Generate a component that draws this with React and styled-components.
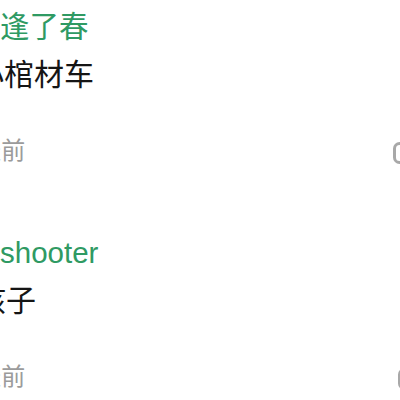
import React from "react";
import styled, { createGlobalStyle } from "styled-components";

const GlobalStyle = createGlobalStyle`
  html, body {
    margin: 0;
    padding: 0;
    background: #ffffff;
  }
  body {
    font-family: "Liberation Sans", "Noto Sans CJK SC", sans-serif;
  }
`;

const Page = styled.div`
  width: 400px;
  height: 400px;
  overflow: hidden;
  background: #ffffff;
  padding-top: 7px;
  box-sizing: border-box;
`;

const CommentList = styled.div`
  display: flex;
  flex-direction: column;
  gap: 62px;
`;

const Comment = styled.div`
  display: flex;
  flex-direction: column;
`;

const Name = styled.div`
  font-size: 29.5px;
  line-height: 40px;
  color: #2f9a63;
  white-space: nowrap;
  text-indent: ${(p) => p.$shift || 0}px;
`;

const Content = styled.div`
  margin-top: 8px;
  font-size: 30px;
  line-height: 40px;
  color: #151515;
  white-space: nowrap;
  text-indent: ${(p) => p.$shift || 0}px;
`;

const Footer = styled.div`
  margin-top: 36px;
  height: 40px;
  display: flex;
  align-items: center;
  justify-content: space-between;
`;

const Time = styled.div`
  font-size: 24px;
  line-height: 40px;
  color: #9b9b9b;
  white-space: nowrap;
  text-indent: ${(p) => p.$shift || 0}px;
`;

const IconSlot = styled.div`
  display: flex;
  margin-right: ${(p) => p.$clip}px;
  margin-top: 6px;
`;

const BubbleIcon = () => (
  <svg width="26" height="24" viewBox="0 0 26 24">
    <rect x="1.5" y="1.5" width="23" height="19" rx="5" fill="none" stroke="#a8a8a8" strokeWidth="3" />
  </svg>
);

const comments = [
  { name: "春又逢了春", nameShift: -59, text: "小棺材车", textShift: -26, time: "3天前", timeShift: -36, clip: -19 },
  { name: "shooter", nameShift: 0, text: "孩子", textShift: -24, time: "3天前", timeShift: -36, clip: -24 },
];

export default function App() {
  return (
    <>
      <GlobalStyle />
      <Page>
        <CommentList>
          {comments.map((c, i) => (
            <Comment key={i}>
              <Name $shift={c.nameShift}>{c.name}</Name>
              <Content $shift={c.textShift}>{c.text}</Content>
              <Footer>
                <Time $shift={c.timeShift}>{c.time}</Time>
                <IconSlot $clip={c.clip}>
                  <BubbleIcon />
                </IconSlot>
              </Footer>
            </Comment>
          ))}
        </CommentList>
      </Page>
    </>
  );
}
